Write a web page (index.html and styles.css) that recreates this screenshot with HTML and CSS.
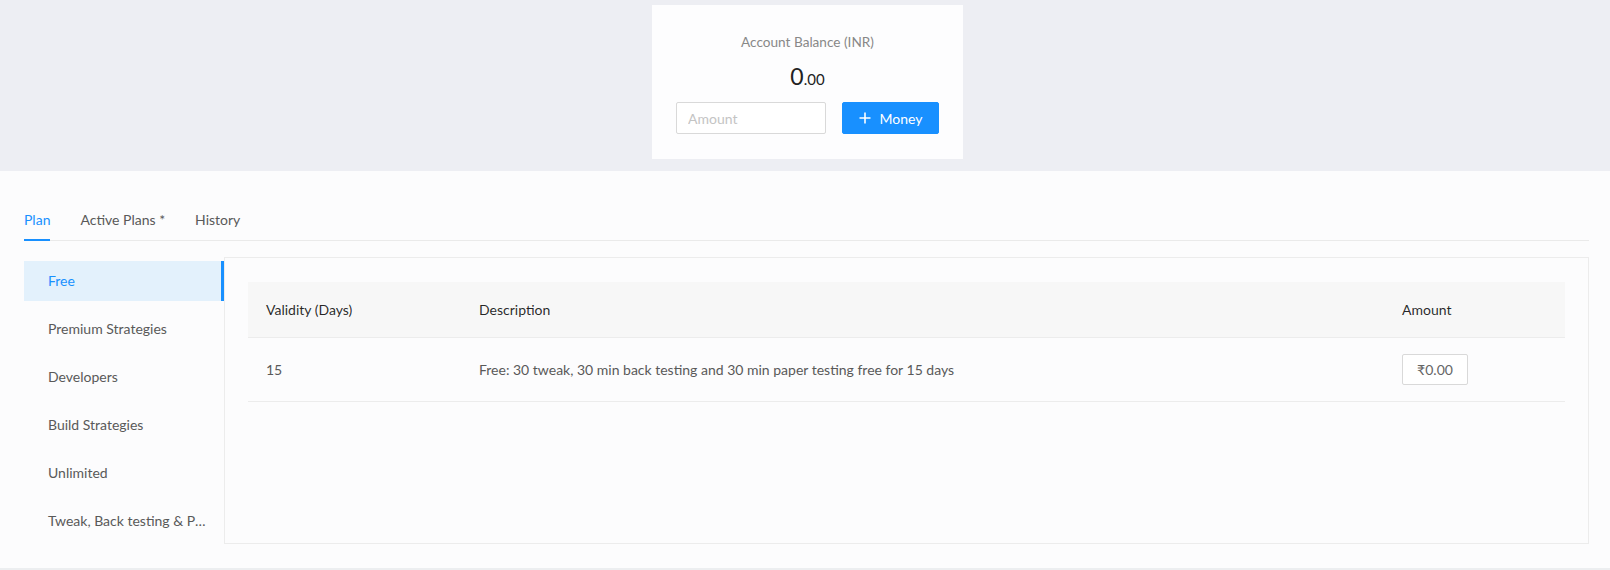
FILE: index.html
```html
<!DOCTYPE html>
<html>
<head>
<meta charset="utf-8">
<link rel="stylesheet" href="styles.css">
</head>
<body>
<div class="top">
  <div class="card">
    <div class="card-title">Account Balance (INR)</div>
    <div class="balance"><span class="int">0</span><span class="dec">.00</span></div>
    <div class="add-row">
      <input class="amount-input" type="text" placeholder="Amount">
      <button class="btn-primary"><svg class="plus" viewBox="0 0 12 12" width="12" height="12"><path d="M6 0.5V11.5M0.5 6H11.5" stroke="#fff" stroke-width="1.6" fill="none"/></svg><span>Money</span></button>
    </div>
  </div>
</div>
<div class="main">
  <div class="tabs">
    <div class="tab active">Plan</div>
    <div class="tab">Active Plans *</div>
    <div class="tab">History</div>
  </div>
  <div class="body">
    <ul class="side">
      <li class="side-item selected">Free</li>
      <li class="side-item">Premium Strategies</li>
      <li class="side-item">Developers</li>
      <li class="side-item">Build Strategies</li>
      <li class="side-item">Unlimited</li>
      <li class="side-item">Tweak, Back testing &amp; Paper testing</li>
    </ul>
    <div class="panel">
      <table class="plans">
        <thead>
          <tr><th class="c1">Validity (Days)</th><th class="c2">Description</th><th class="c3">Amount</th></tr>
        </thead>
        <tbody>
          <tr><td class="c1">15</td><td class="c2">Free: 30 tweak, 30 min back testing and 30 min paper testing free for 15 days</td><td class="c3"><span class="price">₹0.00</span></td></tr>
        </tbody>
      </table>
    </div>
  </div>
</div>
</body>
</html>
```
FILE: styles.css
```css
* { box-sizing: border-box; }
html, body { margin: 0; padding: 0; }
body {
  font-family: "Lato", "Open Sans", sans-serif;
  font-size: 14px;
  color: rgba(0,0,0,0.85);
  background: #fcfcfd;
  height: 570px;
  overflow: hidden;
}
.top {
  background: #edeef3;
  height: 171px;
  padding-top: 5px;
  display: flex;
  justify-content: center;
}
.card {
  width: 311px;
  height: 154px;
  background: #fdfdfe;
  margin-left: 5px;
  display: flex;
  flex-direction: column;
  align-items: center;
  padding-top: 28px;
}
.card-title {
  font-size: 13.6px;
  color: #888;
  line-height: 18px;
}
.balance {
  margin-top: 12px;
  line-height: 26px;
  color: #222;
}
.balance .int { font-size: 23px; }
.balance .dec { font-size: 15px; }
.add-row {
  margin-top: 9px;
  display: flex;
  gap: 16px;
}
.amount-input {
  width: 150px;
  height: 32px;
  border: 1px solid #d9d9d9;
  border-radius: 2px;
  padding: 4px 11px;
  font: inherit;
  font-size: 14px;
  background: #fff;
  outline: none;
}
.amount-input::placeholder { color: #c4c4c4; }
.btn-primary {
  width: 97px;
  height: 32px;
  background: #1890ff;
  border: 1px solid #1890ff;
  border-radius: 2px;
  color: #fff;
  font: inherit;
  font-size: 14px;
  display: flex;
  align-items: center;
  justify-content: center;
  gap: 9px;
  padding: 0;
}
.main {
  padding: 0 21px 0 24px;
  border-bottom: 2px solid #eceef0;
  height: 399px;
  overflow: hidden;
}
.tabs {
  margin-top: 29px;
  display: flex;
  gap: 30px;
  border-bottom: 1px solid #eaeaea;
  height: 41px;
}
.tab {
  line-height: 40px;
  color: #595959;
  height: 41px;
}
.tab.active {
  color: #1890ff;
  border-bottom: 2px solid #1890ff;
}
.body {
  display: flex;
  margin-top: 16px;
}
.side {
  list-style: none;
  margin: 4px 0 0 0;
  padding: 0;
  width: 200px;
  flex: none;
}
.side-item {
  height: 40px;
  line-height: 40px;
  padding: 0 16px 0 24px;
  margin-bottom: 8px;
  color: #595959;
  white-space: nowrap;
  overflow: hidden;
  text-overflow: ellipsis;
}
.side-item:last-child { margin-bottom: 0; }
.side-item.selected {
  background: #e3f1fc;
  color: #1890ff;
  border-right: 3px solid #1890ff;
}
.panel {
  flex: 1;
  height: 287px;
  border: 1px solid #ececec;
  padding: 24px 23px 0 23px;
  background: #fcfcfd;
}
.plans {
  width: 100%;
  border-collapse: collapse;
}
.plans th {
  background: #f7f7f7;
  font-weight: normal;
  text-align: left;
  height: 55px;
  padding: 0 18px;
  border-bottom: 1px solid #ececec;
  color: rgba(0,0,0,0.85);
}
.plans td {
  height: 64px;
  padding: 0 18px;
  border-bottom: 1px solid #ececec;
  color: #595959;
}
.plans .c1 { width: 213px; }
.plans .c3 { width: 181px; }
.price {
  display: inline-block;
  width: 66px;
  height: 31px;
  line-height: 29px;
  border: 1px solid #d9d9d9;
  border-radius: 2px;
  text-align: center;
  color: #666;
  background: #fff;
}
```
